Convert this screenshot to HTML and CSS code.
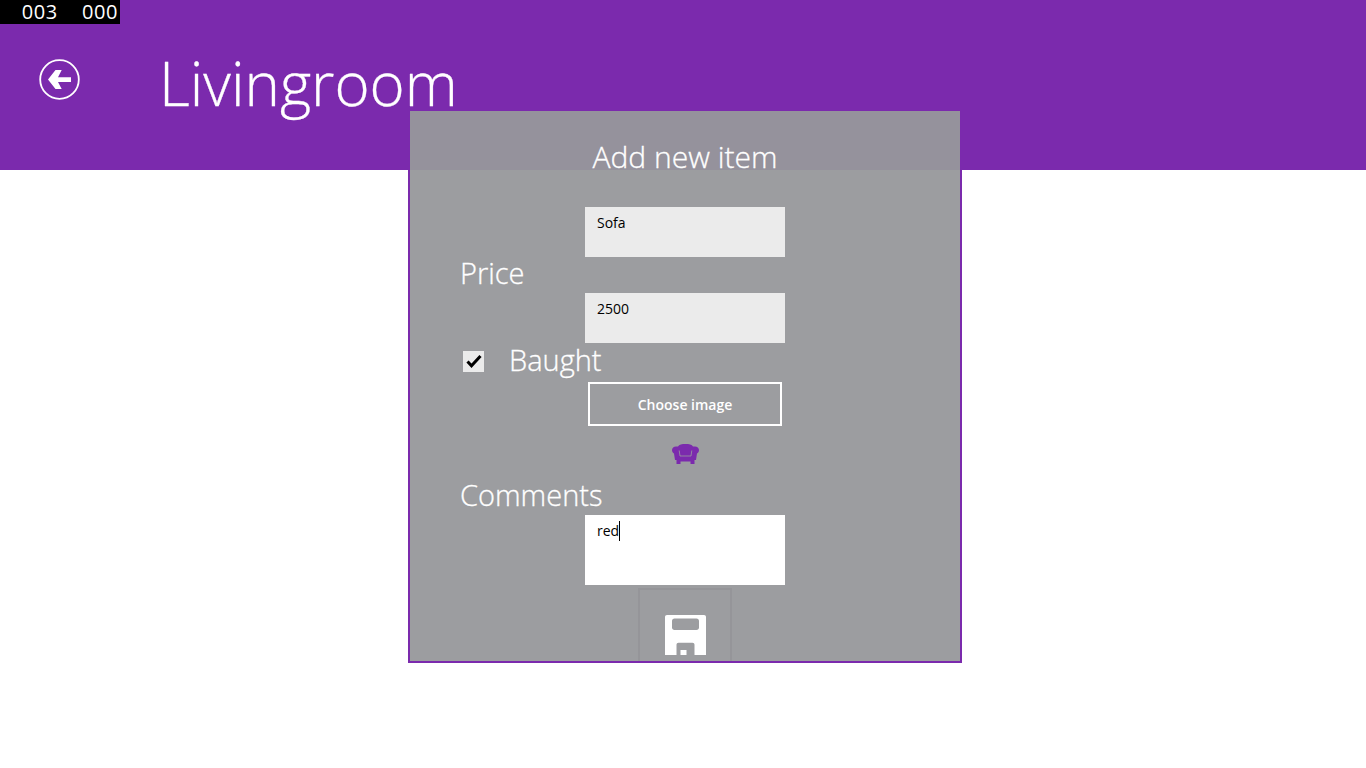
FILE: index.html
```html
<!DOCTYPE html>
<html lang="en">
<head>
<meta charset="utf-8">
<title>Livingroom</title>
<link rel="stylesheet" href="styles.css">
</head>
<body>
<div class="counter"><span>003</span><span>000</span></div>
<header class="header">
  <svg class="back" width="42" height="42" viewBox="0 0 42 42" fill="none">
    <circle cx="20.5" cy="20.5" r="19.3" stroke="#fff" stroke-width="1.8"/>
    <path d="M32 18.3H19L22.700 11H16.500L9 20.500L16.500 30H22.700L19 23H32Z" fill="#fff"/>
  </svg>
  <h1 class="title">Livingroom</h1>
</header>
<main class="dialog">
  <h2 class="dialog-title">Add new item</h2>
  <div class="field field-name">Sofa</div>
  <div class="label label-price">Price</div>
  <div class="field">2500</div>
  <div class="check-row">
    <span class="check">
      <svg width="21" height="21" viewBox="0 0 21 21" fill="none"><path d="M4.500 10.500L8.500 14.800L17.500 5" stroke="#000" stroke-width="3"/></svg>
    </span>
    <span class="label label-baught">Baught</span>
  </div>
  <div class="button">Choose image</div>
  <svg class="chair" width="27" height="20" viewBox="0 0 27 20" fill="none">
    <path fill="#7b2aad" d="M13.500 0C17 0 20 .5 21 2.500L21.500 2.600C24.500 1.800 27 3.500 27 6C27 8 26 9 25 9.500L24 16H22.500V20H18.500V17.500H8.500V20H4.500V16H3L2 9.500C1 9 0 8 0 6C0 3.500 2.500 1.800 5.500 2.600L6 2.500C7 .5 10 0 13.500 0Z"/>
    <path stroke="#9b9b9f" stroke-width="0.8" d="M7.200 6.500L8 12H19L19.800 6.500"/>
  </svg>
  <div class="label label-comments">Comments</div>
  <div class="field field-comments"><span class="caret-text">red</span></div>
  <div class="save">
    <svg width="41" height="40" viewBox="0 0 41 40">
      <path fill-rule="evenodd" fill="#fff" d="M2 0H39C40.200 0 41 .8 41 2V40H29.500V29.700C29.500 28.500 28.700 27.700 27.500 27.700H13.500C12.300 27.700 11.500 28.500 11.500 29.700V40H0V2C0 .8 .8 0 2 0ZM9.500 3.500C8 3.500 7 4.500 7 6V12.500C7 14 8 15 9.500 15H31.500C33 15 34 14 34 12.500V6C34 4.500 33 3.500 31.500 3.500Z"/>
      <rect x="15.500" y="35" width="6" height="5" fill="#fff"/>
    </svg>
  </div>
</main>
</body>
</html>
```
FILE: styles.css
```css
* {
  box-sizing: border-box;
}

html,
body {
  margin: 0;
  height: 100%;
  background: #fff;
  overflow: hidden;
  font-family: "Open Sans", "Noto Sans", sans-serif;
  color: #fff;
}

.counter {
  position: absolute;
  left: 0;
  top: 0;
  width: 120px;
  height: 24px;
  background: #000;
  display: flex;
  justify-content: flex-end;
  gap: 24px;
  padding-right: 2px;
  font-size: 20px;
  letter-spacing: 0.6px;
  line-height: 23px;
}

.header {
  height: 170px;
  background: #7b2aad;
  display: flex;
  align-items: flex-start;
  padding: 59px 0 0 39px;
}

.back {
  flex: none;
}

.title {
  margin: -20px 0 0 78px;
  font-size: 60px;
  font-weight: 300;
  line-height: 88px;
  -webkit-text-stroke: 0.3px #fff;
}

.dialog {
  position: absolute;
  left: 408px;
  top: 109px;
  width: 554px;
  height: 554px;
  border: 2px solid #7b2aad;
  background: rgba(151, 152, 155, 0.95);
  overflow: hidden;
  display: flex;
  flex-direction: column;
}

.dialog-title {
  margin: 24px 0 0;
  height: 48px;
  text-align: center;
  font-size: 30px;
  font-weight: 300;
  line-height: 44px;
  flex: none;
  -webkit-text-stroke: 0.3px #fff;
}

.field {
  align-self: flex-start;
  margin-left: 175px;
  width: 200px;
  height: 50px;
  padding: 6px 12px;
  background: #ebebeb;
  color: #000;
  font-size: 14px;
  line-height: 20px;
  flex: none;
}

.field-name {
  margin-top: 24px;
}

.label {
  font-size: 29px;
  font-weight: 300;
  line-height: 32px;
  -webkit-text-stroke: 0.3px #fff;
}

.label-price {
  margin-left: 50px;
  height: 36px;
  flex: none;
}

.check-row {
  display: flex;
  align-items: center;
  margin: 8px 0 0 53px;
  height: 21px;
  flex: none;
}

.check {
  width: 21px;
  height: 21px;
  background: #ebebeb;
  margin-right: 25px;
  flex: none;
  display: flex;
}

.label-baught {
  margin-bottom: 4px;
}

.button {
  margin: 10px 0 0 178px;
  width: 194px;
  height: 44px;
  border: 2px solid #fff;
  font-size: 14px;
  font-weight: 600;
  line-height: 42px;
  text-align: center;
  flex: none;
}

.chair {
  margin: 18px 0 0 262px;
  flex: none;
}

.label-comments {
  margin: 15px 0 0 50px;
  height: 36px;
  flex: none;
}

.field-comments {
  height: 70px;
  background: #fff;
}

.caret-text {
  border-right: 1px solid #000;
  display: inline-block;
  height: 20px;
}

.save {
  margin: 3px 0 0 228px;
  width: 94px;
  height: 90px;
  flex: none;
  border: 2px solid #959599;
  padding: 25px 0 0 25px;
}

.save svg {
  display: block;
}
```
